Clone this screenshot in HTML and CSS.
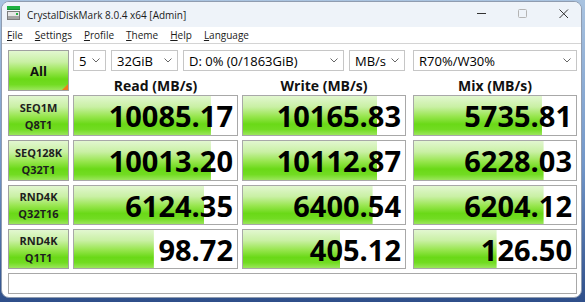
FILE: index.html
```html
<!DOCTYPE html>
<html>
  <head>
    <title>CrystalDiskMark 8.0.4 x64 [Admin]</title>
    <link rel="stylesheet" href="styles.css">
  </head>
  <body>
    <div class="window">
      <!-- title bar -->
      <div class="titlebar">
        <svg class="app-icon" width="13" height="14" viewBox="0 0 13 14">
          <rect x="0" y="0" width="13" height="4" fill="#1fb141"/>
          <rect x="0" y="3" width="13" height="1" fill="#138a30"/>
          <rect x="0.5" y="5.5" width="12" height="8" fill="#e6e6e6" stroke="#7c7c7c"/>
          <rect x="1" y="10" width="11" height="3" fill="#a4a4a4"/>
          <rect x="9" y="7" width="2" height="2" fill="#1fb141"/>
        </svg>
        <span class="title">CrystalDiskMark 8.0.4 x64 [Admin]</span>
        <div class="controls">
          <svg width="10" height="10" viewBox="0 0 10 10"><path d="M0 4.5h9" stroke="#333" fill="none"/></svg>
          <svg width="10" height="10" viewBox="0 0 10 10"><rect x="0.5" y="0.5" width="8" height="8" rx="1" fill="none" stroke="#b4b4b4"/></svg>
          <svg width="10" height="10" viewBox="0 0 10 10"><path d="M0.5 0.5l8.5 8.5M9 0.5l-8.5 8.5" stroke="#333" fill="none"/></svg>
        </div>
      </div>

      <!-- menu -->
      <div class="menubar">
        <span class="menu"><u>F</u>ile</span>
        <span class="menu"><u>S</u>ettings</span>
        <span class="menu"><u>P</u>rofile</span>
        <span class="menu"><u>T</u>heme</span>
        <span class="menu"><u>H</u>elp</span>
        <span class="menu"><u>L</u>anguage</span>
      </div>

      <!-- benchmark board -->
      <div class="board">
        <div class="all">All</div>

        <div class="options">
          <div class="sel count">5 <svg class="chev" width="8" height="5" viewBox="0 0 8 5"><path d="M0.5 0.5l3.5 3.5 3.5-3.5" stroke="#666" fill="none"/></svg></div>
          <div class="sel size">32GiB <svg class="chev" width="8" height="5" viewBox="0 0 8 5"><path d="M0.5 0.5l3.5 3.5 3.5-3.5" stroke="#666" fill="none"/></svg></div>
          <div class="sel drive">D: 0% (0/1863GiB) <svg class="chev" width="8" height="5" viewBox="0 0 8 5"><path d="M0.5 0.5l3.5 3.5 3.5-3.5" stroke="#666" fill="none"/></svg></div>
          <div class="sel unit">MB/s <svg class="chev" width="8" height="5" viewBox="0 0 8 5"><path d="M0.5 0.5l3.5 3.5 3.5-3.5" stroke="#666" fill="none"/></svg></div>
          <div class="sel mode">R70%/W30% <svg class="chev" width="8" height="5" viewBox="0 0 8 5"><path d="M0.5 0.5l3.5 3.5 3.5-3.5" stroke="#666" fill="none"/></svg></div>
        </div>

        <div class="head read">Read (MB/s)</div>
        <div class="head">Write (MB/s)</div>
        <div class="head mix">Mix (MB/s)</div>

        <div class="label"><span>SEQ1M</span><span>Q8T1</span></div>
        <div class="val" style="--fill: 84%">10085.17</div>
        <div class="val" style="--fill: 83%">10165.83</div>
        <div class="val mix" style="--fill: 79%">5735.81</div>

        <div class="label"><span>SEQ128K</span><span>Q32T1</span></div>
        <div class="val" style="--fill: 84%">10013.20</div>
        <div class="val" style="--fill: 83%">10112.87</div>
        <div class="val mix" style="--fill: 80%">6228.03</div>

        <div class="label"><span>RND4K</span><span>Q32T16</span></div>
        <div class="val" style="--fill: 80%">6124.35</div>
        <div class="val" style="--fill: 80%">6400.54</div>
        <div class="val mix" style="--fill: 80%">6204.12</div>

        <div class="label"><span>RND4K</span><span>Q1T1</span></div>
        <div class="val" style="--fill: 49%">98.72</div>
        <div class="val" style="--fill: 60%">405.12</div>
        <div class="val mix" style="--fill: 51%">126.50</div>

        <div class="status"></div>
      </div>
    </div>
  </body>
</html>
```

FILE: styles.css
```css
/* CrystalDiskMark main window */
:root {
  --green: linear-gradient(to bottom, #e2f7d0 0%, #c9f0a4 28%, #98e64f 52%, #6ad917 72%, #72dc22 86%, #9be65c 100%);
}

* {
  box-sizing: border-box;
}

body {
  margin: 0;
  height: 302px;
  overflow: hidden;
  background: linear-gradient(to bottom, #a9c3e0 0%, #7196c8 55%, #2f4f8a 100%);
  font-family: "Open Sans", "Noto Sans", sans-serif;
  color: #111;
}

.window {
  margin: 1px 3px 0 1px;
  height: 297px;
  background-color: #fff;
  border: 1px solid #8f9cb0;
  border-radius: 8px;
  overflow: hidden;
}

/* title bar */
.titlebar {
  height: 25px;
  display: flex;
  align-items: center;
  padding-left: 5px;
  background-color: #eef3f9;
}

.app-icon {
  margin-bottom: 4px;
}

.title {
  margin-left: 7px;
  font-size: 10px;
  color: #1b1b1b;
}

.controls {
  margin-left: auto;
  align-self: flex-start;
  display: flex;
  gap: 31px;
  padding-top: 7px;
  padding-right: 12px;
}

/* menu bar */
.menubar {
  height: 17px;
  display: flex;
  align-items: center;
  border-bottom: 1px solid #d4d4d4;
  font-size: 10px;
  color: #1b1b1b;
}

.menu {
  padding: 0 7px 0 5px;
}

/* board */
.board {
  display: grid;
  grid-template-columns: 61px 165px 164px 167px;
  grid-template-rows: 21px 16px 41px 41px 40px 40px 21px;
  gap: 4px;
  padding: 6px 0 0 6px;
}

.mix {
  margin-left: 3px;
}

.all {
  grid-row: 1 / 3;
  position: relative;
  display: flex;
  align-items: center;
  justify-content: center;
  border: 1px solid #a0a0a0;
  background: var(--green);
  font-size: 13px;
  font-weight: 700;
  color: #111;
}

.all::after {
  content: "";
  position: absolute;
  right: 0;
  bottom: 0;
  border-style: solid;
  border-width: 0 0 6px 6px;
  border-color: transparent transparent #f07d1e transparent;
}

.options {
  grid-column: 2 / 5;
  display: flex;
  gap: 5px;
}

.sel {
  height: 21px;
  display: flex;
  align-items: center;
  justify-content: space-between;
  padding: 0 5px;
  border: 1px solid #c6c6c6;
  background-color: #fff;
  font-size: 13px;
  color: #000;
}

.count { width: 33px; }
.size { width: 67px; }
.drive { width: 161px; }
.unit { width: 56px; }
.mode { width: 164px; margin-left: auto; }

.head {
  padding-top: 3px;
  line-height: 16px;
  text-align: center;
  font-size: 14px;
  font-weight: 700;
}

.label {
  display: flex;
  flex-direction: column;
  align-items: center;
  justify-content: center;
  border: 1px solid #a0a0a0;
  background: var(--green);
  font-size: 11px;
  font-weight: 700;
  line-height: 17px;
  color: #1e1e1e;
}

.val {
  display: flex;
  align-items: center;
  justify-content: flex-end;
  padding-right: 4px;
  border: 1px solid #a8a8a8;
  background-color: #fff;
  background-image: var(--green);
  background-repeat: no-repeat;
  background-size: var(--fill) 100%;
  font-size: 29px;
  font-weight: 700;
  line-height: 1;
  color: #000;
}

.status {
  grid-column: 1 / 5;
  border: 1px solid #a8a8a8;
  background-color: #fff;
}
```
